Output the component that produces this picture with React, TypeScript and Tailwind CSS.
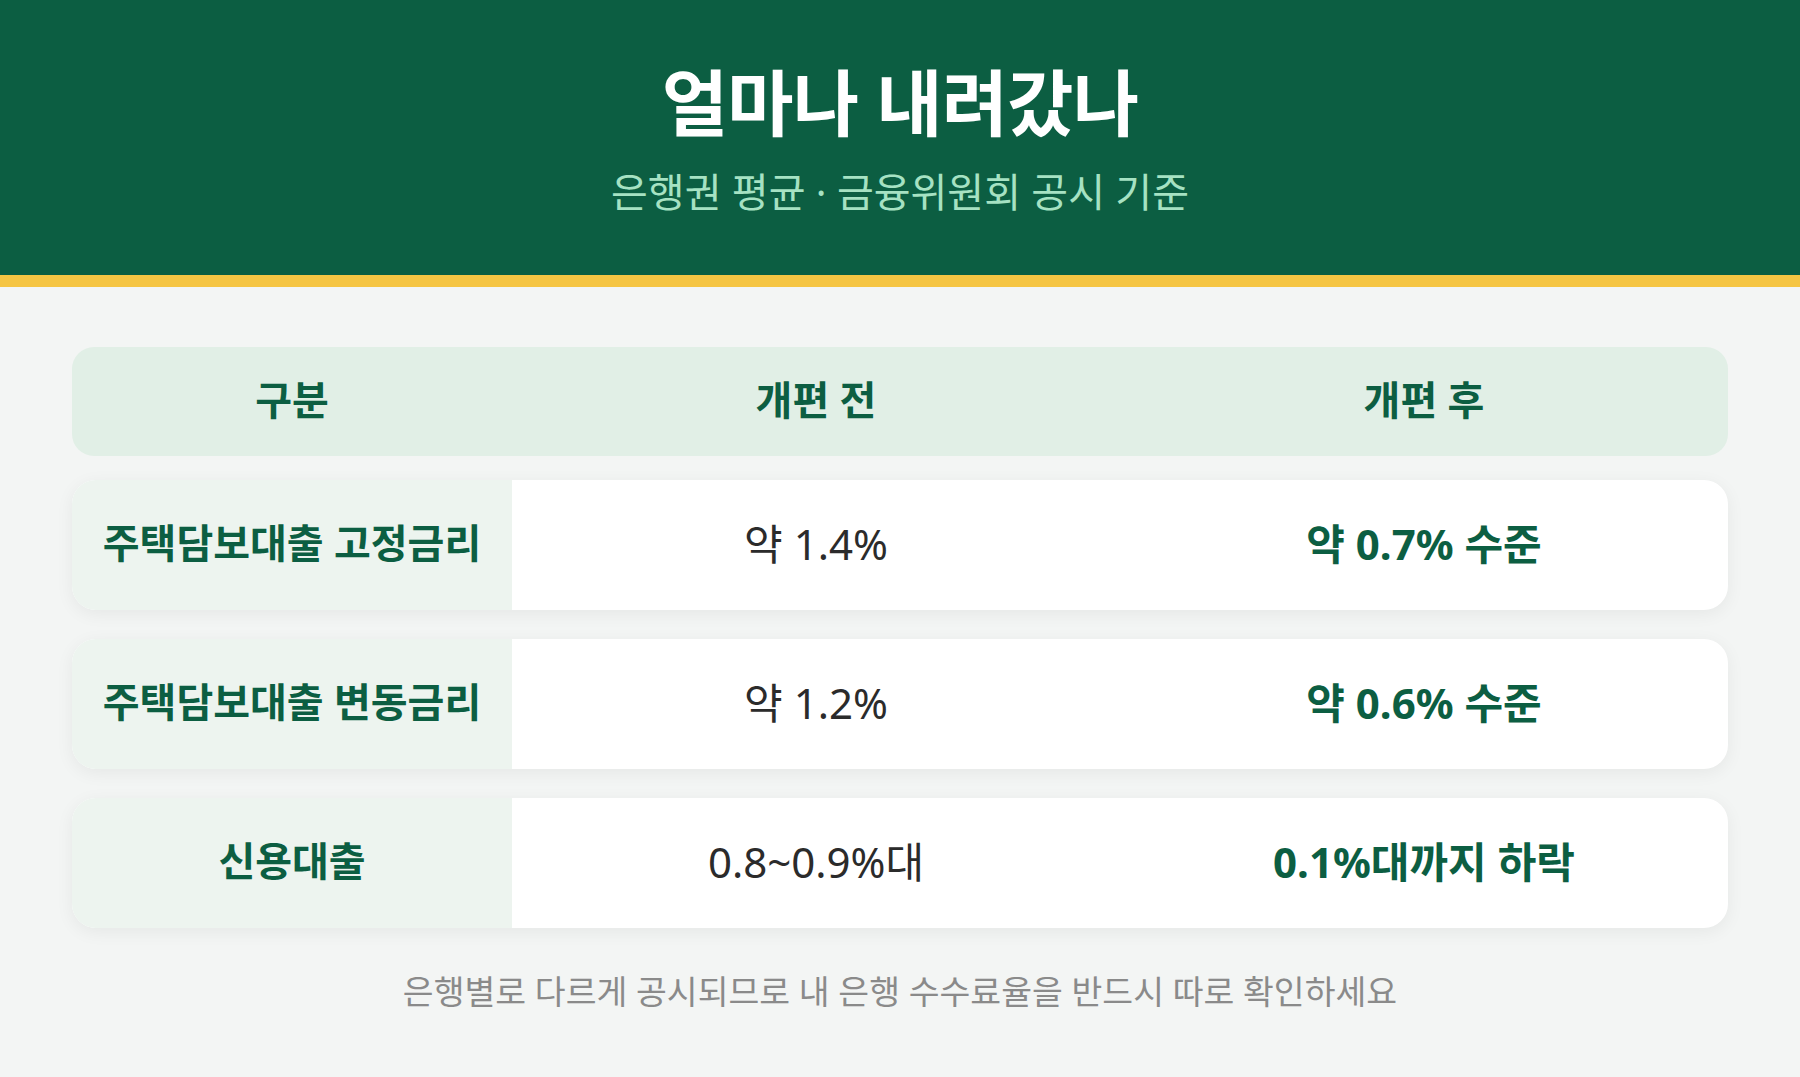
const rows = [
  { label: '주택담보대출 고정금리', before: '약 1.4%', after: '약 0.7% 수준' },
  { label: '주택담보대출 변동금리', before: '약 1.2%', after: '약 0.6% 수준' },
  { label: '신용대출', before: '0.8~0.9%대', after: '0.1%대까지 하락' },
];

export default function App() {
  return (
    <div className="min-h-[1077px] w-full bg-[#f3f5f4] font-['Noto_Sans','Noto_Sans_CJK_KR',sans-serif]">
      {/* Header */}
      <header className="flex h-[287px] flex-col items-center border-b-[12px] border-[#f5c543] bg-[#0c5e42] pt-[66px]">
        <h1 className="text-[72px] font-bold leading-none tracking-[-0.01em] text-white">얼마나 내려갔나</h1>
        <p className="mt-[34px] text-[40px] leading-none text-[#a6e2c3]">
          은행권 평균 · 금융위원회 공시 기준
        </p>
      </header>

      <main className="px-[72px] pt-[60px]">
        {/* Column titles */}
        <div className="grid h-[109px] grid-cols-[440px_1fr_1fr] items-center rounded-[22px] bg-[#e1efe6] pb-[4px] text-[40px] font-bold text-[#0c5e42]">
          <div className="text-center">구분</div>
          <div className="text-center">개편 전</div>
          <div className="text-center">개편 후</div>
        </div>

        <div className="mt-[24px] flex flex-col gap-[29px]">
          {rows.map((r) => (
            <div
              key={r.label}
              className="grid h-[130px] grid-cols-[440px_1fr_1fr] overflow-hidden rounded-[24px] bg-white shadow-[0_4px_18px_rgba(0,0,0,0.06)]"
            >
              <div className="flex items-center justify-center bg-[#edf4ef] pb-[4px] text-[40px] font-bold text-[#0c5e42]">
                {r.label}
              </div>
              <div className="flex items-center justify-center pb-[4px] text-[42px] text-[#2b2b2b]">
                {r.before}
              </div>
              <div className="flex items-center justify-center pb-[4px] text-[42px] font-bold text-[#0c5e42]">
                {r.after}
              </div>
            </div>
          ))}
        </div>

        <p className="mt-[38px] text-center text-[33.5px] text-[#8a8a8a]">
          은행별로 다르게 공시되므로 내 은행 수수료율을 반드시 따로 확인하세요
        </p>
      </main>
    </div>
  );
}
